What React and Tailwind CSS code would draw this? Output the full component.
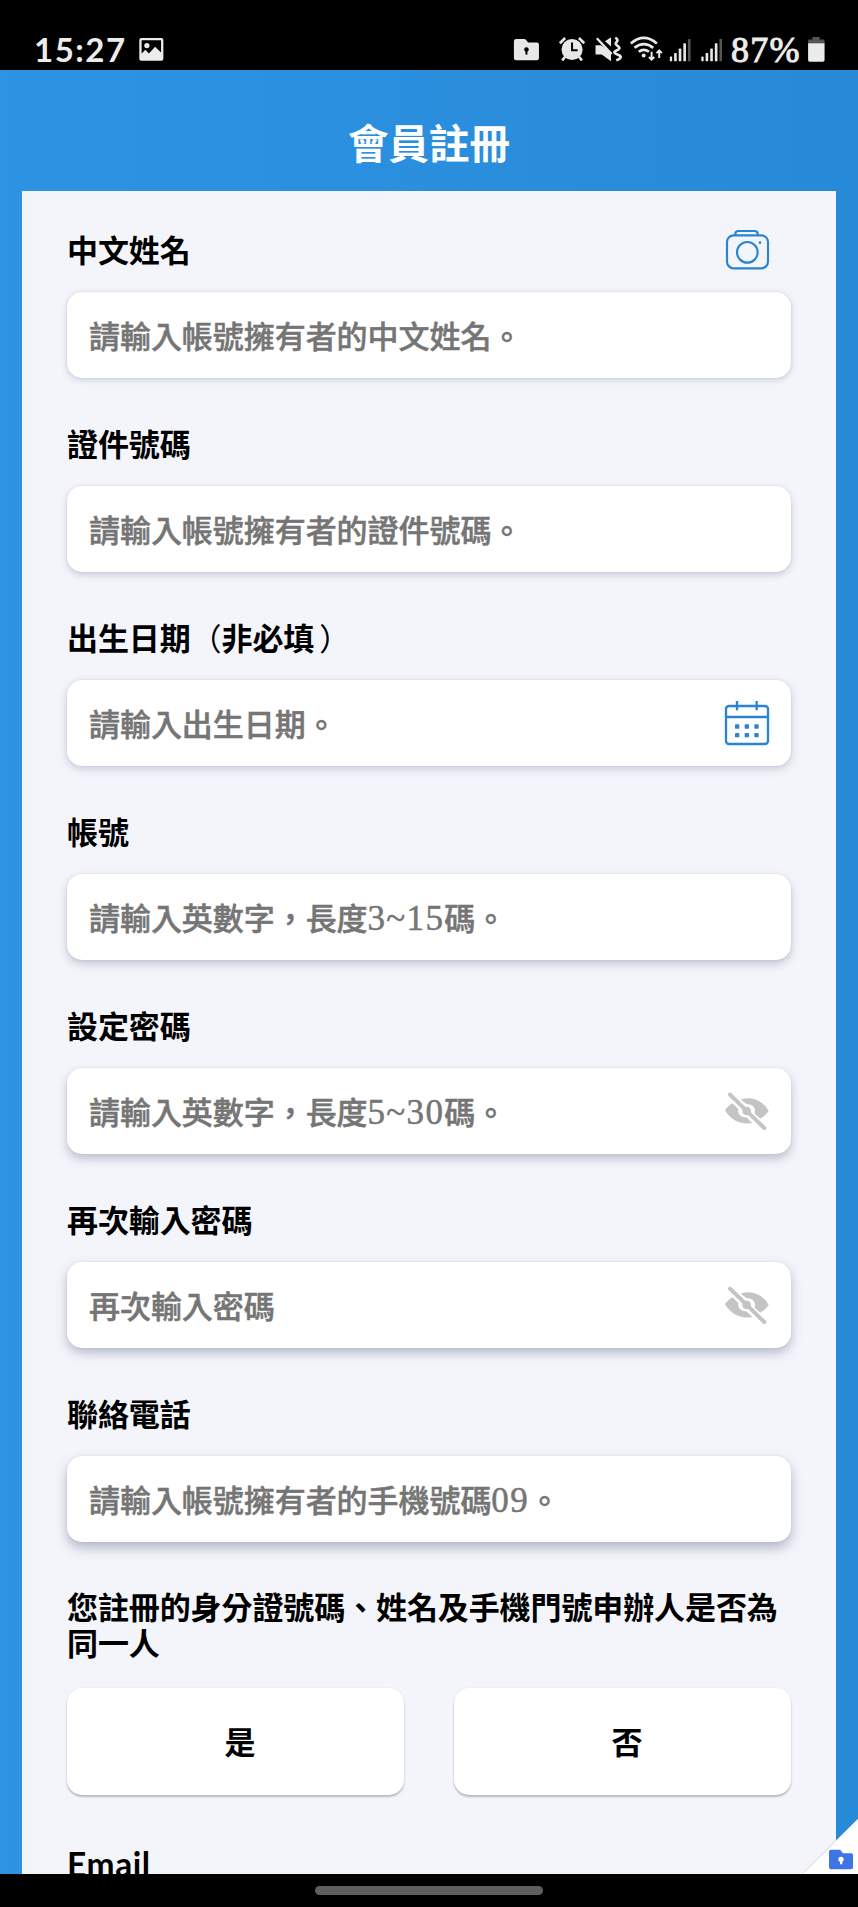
import { useState } from 'react';

const FIELDS = [
  { id: 'name',     label: '中文姓名',             placeholder: '請輸入帳號擁有者的中文姓名。', action: 'camera',   shadow: 'shadow-[0_2px_6px_rgba(60,75,110,0.22),0_0_2px_rgba(60,75,110,0.14)]' },
  { id: 'idNumber', label: '證件號碼',             placeholder: '請輸入帳號擁有者的證件號碼。', shadow: 'shadow-[0_3px_7px_rgba(60,75,110,0.23),0_0_2px_rgba(60,75,110,0.12)]' },
  { id: 'birthday', label: '出生日期（非必填）',   placeholder: '請輸入出生日期。', icon: 'calendar', shadow: 'shadow-[0_3px_8px_rgba(60,75,110,0.25),0_0_2px_rgba(60,75,110,0.12)]' },
  { id: 'account',  label: '帳號',                 placeholder: '請輸入英數字，長度3~15碼。', shadow: 'shadow-[0_4px_9px_rgba(60,75,110,0.28),0_0_2px_rgba(60,75,110,0.12)]' },
  { id: 'password', label: '設定密碼',             placeholder: '請輸入英數字，長度5~30碼。', icon: 'eye', shadow: 'shadow-[0_5px_10px_rgba(60,75,110,0.3),0_0_2px_rgba(60,75,110,0.12)]' },
  { id: 'confirm',  label: '再次輸入密碼',         placeholder: '再次輸入密碼', icon: 'eye', shadow: 'shadow-[0_5px_11px_rgba(60,75,110,0.34),0_0_2px_rgba(60,75,110,0.1)]' },
  { id: 'phone',    label: '聯絡電話',             placeholder: '請輸入帳號擁有者的手機號碼09。', shadow: 'shadow-[0_6px_12px_rgba(60,75,110,0.36),0_0_2px_rgba(60,75,110,0.1)]' },
];

// Latin digits get their own face and spacing, brackets a lighter weight
function Mixed({ text }) {
  return text.split(/([0-9~]+|[（）])/).map((part, i) => {
    if (i % 2 === 0) return part;
    if (part === '（') return <span key={i} className="font-normal">{part}</span>;
    if (part === '）') return <span key={i} className="ml-[5px] font-normal">{part}</span>;
    return <span key={i} className="font-['Liberation_Serif'] text-[35px] leading-none font-normal tracking-[1.3px]">{part}</span>;
  });
}

function CameraIcon() {
  return (
    <svg viewBox="315 144 135 129" className="w-[45px] h-[43px]" fill="none" stroke="#2b84cf" strokeWidth="6.5">
      <rect x="321" y="166" width="123" height="99" rx="20"/>
      <path d="M346 166v-4q0-9 9-9h48q10 0 10 9v4"/>
      <circle cx="382" cy="217" r="31"/>
      <circle cx="420" cy="188" r="4" fill="#2b84cf" stroke="none"/>
    </svg>
  );
}

function CalendarIcon() {
  return (
    <svg viewBox="312 120 138 138" className="w-[46px] h-[46px]" fill="none" stroke="#2b84cf" strokeWidth="7">
      <rect x="318" y="138" width="126" height="114" rx="9"/>
      <path d="M318 171h126M351 123v28M410 123v28"/>
      <g fill="#2b84cf" stroke="none">
        {[193, 219].map(y => [345, 374, 403].map(x => (
          <rect key={`${x}-${y}`} x={x} y={y} width="13" height="13" rx="2"/>
        )))}
      </g>
    </svg>
  );
}

function EyeOffIcon() {
  return (
    <svg viewBox="312 120 138 123" className="w-[46px] h-[41px]" fill="#c4c4c4">
      <path d="M315 178C320 170 328 162 337 157L355 174C352 189 364 200 379 199L397 216C361 223 333 207 315 178Z"/>
      <path d="M362 146C397 133 430 151 446 180C440 189 431 197 421 203L404 188C408 171 398 160 381 160Z"/>
      <circle cx="380" cy="180" r="13"/>
      <path d="M330 131L433 231" stroke="#c4c4c4" strokeWidth="12" strokeLinecap="round"/>
    </svg>
  );
}

function Signal({ x, className }) {
  return (
    <svg viewBox={`${x} 105 90 85`} className={className} fill="#e8e8e8">
      <rect x={x + 5} y="170" width="7" height="15" rx="2"/>
      <rect x={x + 18} y="160" width="8" height="25" rx="2"/>
      <rect x={x + 32} y="146" width="8" height="39" rx="2"/>
      <rect x={x + 46} y="130" width="8" height="55" rx="2"/>
      <rect x={x + 60} y="117" width="8" height="68" rx="2" fill="#555"/>
    </svg>
  );
}

function StatusBar() {
  return (
    <div className="flex h-[70px] shrink-0 items-end justify-between bg-black pl-[34px] pr-[31px] pb-[7px] text-[#ececec]">
      <div className="flex items-end">
        <span className="w-[104px] font-['Lato'] text-[33px] leading-[27px] font-bold tracking-[1.5px]">15:27</span>
        <svg viewBox="414 105 80 85" className="w-[27px] h-[28px]">
          <rect x="417" y="114" width="73" height="69" rx="6" fill="#ececec"/>
          <path d="M424 121h59v37l-18-17-19 20-11-11-11 12z" fill="#000"/>
          <circle cx="440" cy="137" r="8" fill="#ececec"/>
        </svg>
      </div>
      <div className="flex items-end">
        <svg viewBox="66 105 138 85" className="w-[46px] h-[28px]">
          <path d="M78 117h24q4 0 6 3l6 8h27q6 0 6 6v41q0 7-7 7H78q-7 0-7-7v-51q0-7 7-7z" fill="#e8e8e8"/>
          <circle cx="109" cy="149" r="7" fill="#000"/>
          <rect x="106" y="150" width="6" height="15" rx="2" fill="#000"/>
        </svg>
        <svg viewBox="204 105 108 85" className="w-9 h-[28px]" fill="none" stroke="#e8e8e8" strokeWidth="8">
          <circle cx="246" cy="149" r="32" fill="#e8e8e8" stroke="none"/>
          <path d="M209 130l16-16M283 130l-16-16M225 171l-9 11M267 171l9 11"/>
          <path d="M246 128v23h17" stroke="#000" strokeWidth="6"/>
        </svg>
        <svg viewBox="312 105 102 85" className="w-[34px] h-[28px]" fill="#e8e8e8">
          <path d="M316 136h16l31 20v29l-28-21h-19zM345 124l18-12v28z"/>
          <path d="M320 115l45 48" stroke="#e8e8e8" strokeWidth="7"/>
          <path d="M376 113q11 7 4 13t4 13-4 13 4 13-5 17" fill="none" stroke="#e8e8e8" strokeWidth="8"/>
        </svg>
        <svg viewBox="414 105 120 85" className="w-10 h-[28px]" fill="none" stroke="#e8e8e8" strokeWidth="8">
          <path d="M422 131q39-34 79 0M433 144q28-23 57 0M446 156q15-12 31 0"/>
          <circle cx="461" cy="167" r="6" fill="#e8e8e8" stroke="none"/>
          <path d="M485 156v23M477 172l8 8 8-8M508 175v-22M500 160l8-8 8 8" strokeWidth="6"/>
        </svg>
        <Signal x={534} className="w-[30px] h-[28px]"/>
        <Signal x={624} className="w-[33px] h-[28px]"/>
        <span className="w-[74px] font-['Liberation_Serif'] text-[36px] leading-[26px] tracking-[1.2px] [-webkit-text-stroke:1px_#ececec]">87%</span>
        <svg viewBox="948 105 66 85" className="w-[22px] h-[28px]">
          <path d="M970 111h22v8h11q4 0 4 4v8h-50v-8q0-4 4-4h9z" fill="#555"/>
          <path d="M957 130h50v51q0 5-5 5h-40q-5 0-5-5z" fill="#ececec"/>
        </svg>
      </div>
    </div>
  );
}

function Field({ field }) {
  return (
    <div className="flex h-[194px] flex-col">
      <div className="flex h-[84px] items-center justify-between pr-[21px] pb-[2px]">
        <label className="text-[31px] font-bold tracking-[-0.1px]"><Mixed text={field.label}/></label>
        {field.action === 'camera' && <CameraIcon/>}
      </div>
      <div className={`flex h-[86px] items-center justify-between rounded-[15px] bg-white pl-[22px] pr-[21px] ${field.shadow}`}>
        <span className="text-[31px] font-medium tracking-[-0.05px] text-[#757575] [-webkit-text-stroke:0.5px_#757575]">
          <Mixed text={field.placeholder}/>
        </span>
        {field.icon === 'calendar' && <CalendarIcon/>}
        {field.icon === 'eye' && <EyeOffIcon/>}
      </div>
    </div>
  );
}

export default function App() {
  const [samePerson, setSamePerson] = useState(null);

  return (
    <div className="flex h-[1907px] w-[858px] flex-col overflow-hidden bg-black font-['Noto_Sans_CJK_TC',sans-serif] text-black">
      <StatusBar/>

      <div className="relative flex h-[1804px] shrink-0 flex-col overflow-hidden bg-linear-to-r from-[#2e93e3] to-[#268ad8] px-[22px]">
        <h1 className="flex h-[121px] shrink-0 items-center justify-center pt-[23px] text-[40.5px] leading-none font-bold text-white">會員註冊</h1>

        <main className="h-[1683px] bg-[#f4f5fb] px-[45px] pt-[17px]">
          {FIELDS.map(f => <Field key={f.id} field={f}/>)}

          <p className="pt-[22px] text-[31px] leading-[36px] font-bold tracking-[-0.1px]">
            您註冊的身分證號碼、姓名及手機門號申辦人是否為同一人
          </p>
          <div className="mt-[28px] flex gap-[50px]">
            {['是', '否'].map(option => (
              <button key={option} onClick={() => setSamePerson(option)} aria-pressed={samePerson === option}
                className="h-[107px] flex-1 rounded-[15px] bg-white pl-[9px] text-[31px] font-bold shadow-[0_2px_2px_rgba(0,0,0,0.24),0_0_2px_rgba(0,0,0,0.08)]">
                {option}
              </button>
            ))}
          </div>
          <div className="pt-[49px] font-['Lato'] text-[33.5px] leading-[40px] font-bold tracking-[0.6px]">Email</div>
        </main>

        {/* Secure folder corner */}
        <svg viewBox="1083 740 171 171" className="absolute right-0 bottom-0 w-[57px] h-[57px]">
          <path d="M1087 911L1254 745V911Z" fill="#fff"/>
          <path d="M1087 911L1188 811" stroke="#d5d5da" strokeWidth="3"/>
          <path d="M1172 838h26q3 0 5 3l6 8h25q5 0 5 5v37q0 6-6 6h-60q-6 0-6-6v-47q0-6 5-6z" fill="#3f74e6"/>
          <circle cx="1203" cy="867" r="8" fill="#fff"/>
          <rect x="1200" y="868" width="7" height="14" rx="2" fill="#fff"/>
        </svg>
      </div>

      <div className="flex h-[33px] items-center justify-center bg-black">
        <div className="h-[9px] w-[228px] rounded-full bg-[#5f5f5f]"/>
      </div>
    </div>
  );
}
